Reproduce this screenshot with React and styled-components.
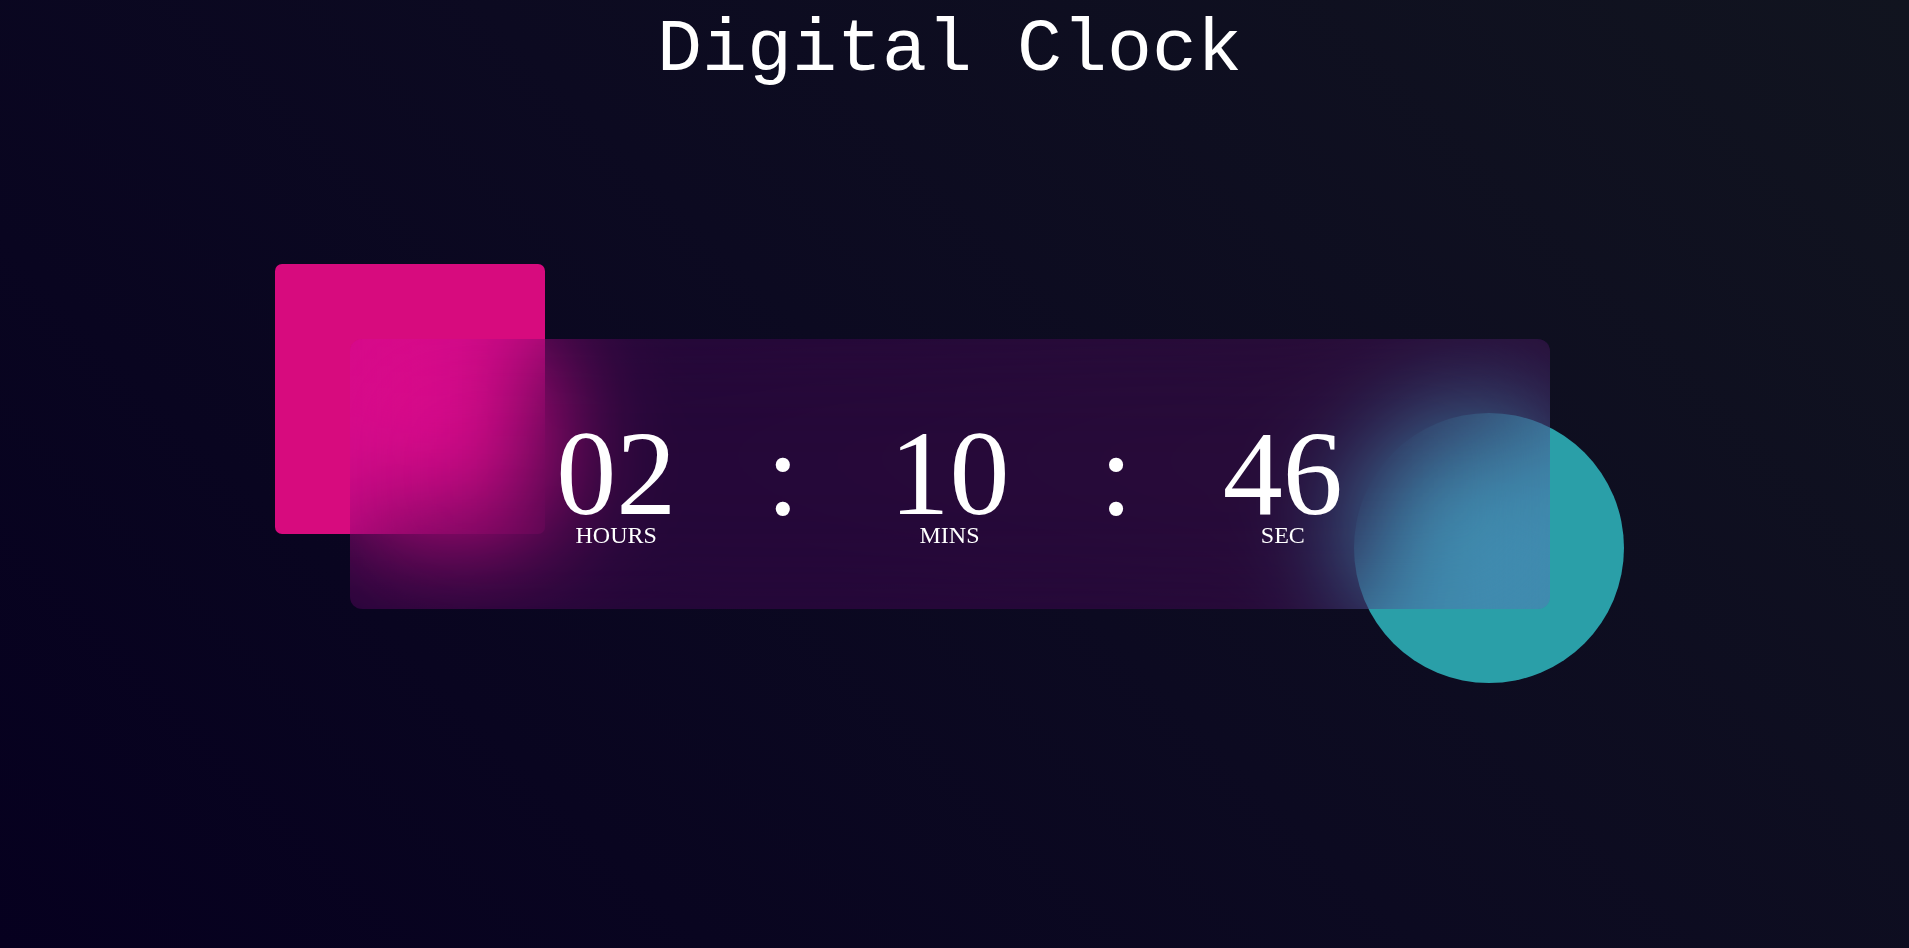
import React from 'react';
import styled, { createGlobalStyle } from 'styled-components';

const GlobalStyle = createGlobalStyle`
  * {
    box-sizing: border-box;
  }

  body {
    margin: 0;
    background: #0b0820;
  }
`;

const Page = styled.div`
  min-height: 100vh;
  display: flex;
  flex-direction: column;
  padding-right: 10px;
  background: linear-gradient(45deg, #06001f 0%, #0c0a21 50%, #11141f 100%);
  color: #fff;
  overflow: hidden;
`;

const Title = styled.h1`
  margin: 0;
  padding-top: 8px;
  font-family: 'Liberation Mono', 'Courier New', monospace;
  font-size: 75px;
  font-weight: normal;
  text-align: center;
`;

// centers the clock on the whole viewport, not just the area under the title
const Stage = styled.div`
  flex: 1;
  display: flex;
  align-items: center;
  justify-content: center;
  padding-bottom: 93px;
`;

const ClockWrap = styled.div`
  position: relative;
  width: 1200px;
  height: 270px;
`;

const Square = styled.div`
  position: absolute;
  top: -75px;
  left: -75px;
  width: 270px;
  height: 270px;
  border-radius: 7px;
  background: #d70b7e;
`;

const Circle = styled.div`
  position: absolute;
  right: -74px;
  bottom: -74px;
  width: 270px;
  height: 270px;
  border-radius: 50%;
  background: #2a9fa8;
`;

const Card = styled.div`
  position: relative;
  height: 100%;
  display: flex;
  align-items: center;
  justify-content: center;
  padding-top: 27px;
  border-radius: 12px;
  background: rgba(214, 10, 227, 0.13);
  backdrop-filter: blur(58px);
  -webkit-backdrop-filter: blur(58px);
  font-family: 'Liberation Serif', 'Times New Roman', serif;
`;

const Row = styled.div`
  display: flex;
  align-items: flex-start;
  gap: 90px;
`;

const Unit = styled.div`
  display: flex;
  flex-direction: column;
  align-items: center;
`;

const Number = styled.span`
  font-size: 120px;
  line-height: 0.8;
`;

const Label = styled.span`
  font-size: 24px;
  text-transform: uppercase;
`;

const time = [
  { value: '02', label: 'Hours' },
  { value: '10', label: 'Mins' },
  { value: '46', label: 'Sec' },
];

function App() {
  return (
    <Page>
      <GlobalStyle />
      <Title>Digital Clock</Title>
      <Stage>
        <ClockWrap>
          <Square />
          <Circle />
          <Card>
            <Row>
              {time.map((t, i) => (
                <React.Fragment key={t.label}>
                  {i > 0 && <Number>:</Number>}
                  <Unit>
                    <Number>{t.value}</Number>
                    <Label>{t.label}</Label>
                  </Unit>
                </React.Fragment>
              ))}
            </Row>
          </Card>
        </ClockWrap>
      </Stage>
    </Page>
  );
}

export default App;
